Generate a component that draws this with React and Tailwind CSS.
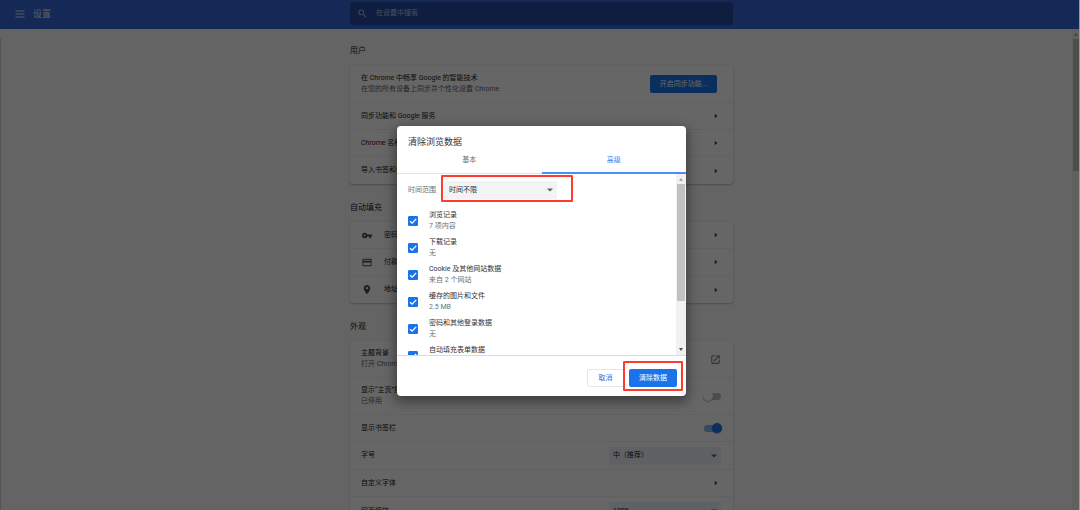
import React from 'react';

function ArrowRight() {
  return (
    <span className="flex w-[11px] shrink-0 justify-center">
      <svg viewBox="0 0 4 6" className="h-[6px] w-1" aria-hidden="true">
        <path d="M.8 .8 3.300 3 .8 5.200z" fill="#333639" />
      </svg>
    </span>
  );
}

function CaretDown({ className }) {
  return (
    <svg viewBox="0 0 6 4" className={`pointer-events-none absolute h-1 w-[6px] ${className}`} aria-hidden="true">
      <path d="M0 .5h6L3 3.5z" fill="#5f6368" />
    </svg>
  );
}

function Heading({ children, first }) {
  return (
    <h2 className={`flex items-center text-[8px] text-[#202124] ${first ? 'h-[37px] pt-[7px]' : 'h-[38px] pt-[10px]'}`}>
      {children}
    </h2>
  );
}

function Card({ children }) {
  return (
    <section className="divide-y divide-[#f0f1f2] rounded-[3px] bg-white shadow-[0_1px_2px_rgba(60,64,67,0.3),0_0_1px_rgba(60,64,67,0.2)]">
      {children}
    </section>
  );
}

function TextPair({ title, sub }) {
  return (
    <span className="flex flex-1 flex-col text-left leading-[11px]">
      <span>{title}</span>
      {sub && <span className="text-[#5f6368]">{sub}</span>}
    </span>
  );
}

function LinkRow({ icon, title }) {
  return (
    <button type="button" className="flex h-[27px] w-full items-center gap-[11px] pr-3 pl-[11px]">
      {icon}
      <TextPair title={title} />
      <ArrowRight />
    </button>
  );
}

function ToggleRow({ title, sub, on }) {
  return (
    <label className={`relative flex items-center pl-[11px] ${on ? 'pr-[11px]' : 'pr-3'} ${sub ? 'h-[37px]' : 'h-[27px]'}`}>
      <TextPair title={title} sub={sub} />
      <input type="checkbox" role="switch" defaultChecked={on} className="peer sr-only" />
      <span
        className={`flex h-[7px] w-[18px] items-center rounded-full ${on ? 'justify-end bg-[#8ab4f8]' : 'justify-start bg-[#bdc1c6]'}`}
      >
        <span
          className={`size-[10px] shrink-0 rounded-full shadow-[0_1px_1px_rgba(0,0,0,0.3)] ${on ? 'bg-[#1a73e8]' : 'bg-white'}`}
        />
      </span>
    </label>
  );
}

function SelectRow({ id, title, value }) {
  return (
    <div className="flex h-7 items-center pr-3 pl-[11px]">
      <label htmlFor={id} className="flex-1">{title}</label>
      <span className="relative flex">
        <select id={id} className="h-[18px] w-28 appearance-none rounded-[2px] bg-[#f1f3f4] pl-1">
          <option>{value}</option>
        </select>
        <CaretDown className="top-[7px] right-1" />
      </span>
    </div>
  );
}

const ICON = 'h-[11px] w-3 shrink-0';

function KeyIcon() {
  return (
    <svg viewBox="0 0 24 24" className={ICON} fill="#4a4d51" aria-hidden="true">
      <path d="M12.65 10A5.99 5.99 0 0 0 7 6c-3.31 0-6 2.69-6 6s2.69 6 6 6a5.99 5.99 0 0 0 5.65-4H17v4h4v-4h2v-4H12.65zM7 14c-1.1 0-2-.9-2-2s.9-2 2-2 2 .9 2 2-.9 2-2 2z" />
    </svg>
  );
}

function CardIcon() {
  return (
    <svg viewBox="0 0 24 24" className={ICON} fill="#4a4d51" aria-hidden="true">
      <path d="M20 4H4c-1.11 0-1.99.89-1.99 2L2 18c0 1.11.89 2 2 2h16c1.11 0 2-.89 2-2V6c0-1.11-.89-2-2-2zm0 14H4v-6h16v6zm0-10H4V6h16v2z" />
    </svg>
  );
}

function PinIcon() {
  return (
    <svg viewBox="0 0 24 24" className={ICON} fill="#4a4d51" aria-hidden="true">
      <path d="M12 2C8.13 2 5 5.13 5 9c0 5.25 7 13 7 13s7-7.75 7-13c0-3.87-3.13-7-7-7zm0 9.5a2.5 2.5 0 0 1 0-5 2.5 2.5 0 0 1 0 5z" />
    </svg>
  );
}

const ITEMS = [
  ['浏览记录', '7 项内容'],
  ['下载记录', '无'],
  ['Cookie 及其他网站数据', '来自 2 个网站'],
  ['缓存的图片和文件', '2.5 MB'],
  ['密码和其他登录数据', '无'],
  ['自动填充表单数据', ''],
];

function CheckItem({ title, sub }) {
  return (
    <label className="flex h-[27px] items-center gap-[11px]">
      <span className="grid size-[10px] shrink-0">
        <input
          type="checkbox"
          defaultChecked
          className="peer col-start-1 row-start-1 size-[10px] appearance-none rounded-[1px] border border-[#5f6368] checked:border-[#1a73e8] checked:bg-[#1a73e8]"
        />
        <svg
          viewBox="0 0 10 10"
          className="pointer-events-none invisible col-start-1 row-start-1 size-[10px] peer-checked:visible"
          aria-hidden="true"
        >
          <path d="M2 5.2 4.1 7.2 8.2 2.9" fill="none" stroke="#fff" strokeWidth="1.3" />
        </svg>
      </span>
      <span className="flex h-[22px] flex-col leading-[11px]">
        <span>{title}</span>
        <span className="text-[#6b6f74]">{sub}</span>
      </span>
    </label>
  );
}

function ClearDataDialog() {
  return (
    <div
      role="dialog"
      aria-labelledby="dialog-title"
      className="flex h-[270px] w-[289px] flex-col rounded-[4px] bg-white text-[#303236] shadow-[0_4px_12px_2px_rgba(0,0,0,0.4)]"
    >
      <h1 id="dialog-title" className="h-5 px-[11px] pt-[10px] text-[9px] leading-3">清除浏览数据</h1>
      <div role="tablist" className="flex h-7 shrink-0 border-b border-[#e0e2e5]">
        <button type="button" role="tab" aria-selected="false" className="flex-1 pt-[2px] text-[#6b6f74]">
          基本
        </button>
        <button
          type="button"
          role="tab"
          aria-selected="true"
          className="-mb-px flex-1 border-b-2 border-[#4a90f4] pt-[3px] text-[#3b86f0]"
        >
          高级
        </button>
      </div>
      <div className="flex min-h-0 flex-1">
        <div className="flex-1 overflow-hidden pt-[7px] pl-[11px]">
          <div className="mb-2 flex h-[18px] items-center gap-2">
            <label htmlFor="range" className="text-[#6b6f74]">时间范围</label>
            <span className="relative flex">
              <select id="range" className="h-[18px] w-[113px] appearance-none rounded-[2px] bg-[#f1f3f4] pl-[5px]">
                <option>时间不限</option>
              </select>
              <CaretDown className="top-[7px] right-1" />
              <span className="pointer-events-none absolute -top-[6px] -left-[3px] h-[27px] w-[132px] rounded-[1px] border-2 border-[#ff3b2f]" />
            </span>
          </div>
          {ITEMS.map(([title, sub]) => (
            <CheckItem key={title} title={title} sub={sub} />
          ))}
        </div>
        <div className="flex w-[10px] flex-col items-center justify-between bg-[#f1f1f1] py-1" aria-hidden="true">
          <svg viewBox="0 0 4 3" className="h-[3px] w-1"><path d="M0 3h4L2 0z" fill="#a3a3a3" /></svg>
          <div className="mt-[3px] mb-auto h-[117px] w-2 bg-[#c1c1c1]" />
          <svg viewBox="0 0 4 3" className="h-[3px] w-1"><path d="M0 0h4L2 3z" fill="#505050" /></svg>
        </div>
      </div>
      <div className="flex h-[41px] shrink-0 items-start justify-end gap-[5px] border-t border-[#dadce0] pt-[13px] pr-[9px]">
        <button type="button" className="h-[18px] w-[37px] rounded-[2px] border border-[#e4e6e9] text-[#1a73e8]">
          取消
        </button>
        <span className="relative flex">
          <button type="button" className="h-[18px] w-12 rounded-[2px] bg-[#1a73e8] text-white">
            清除数据
          </button>
          <span className="pointer-events-none absolute -top-2 -right-[6px] -bottom-1 -left-[6px] rounded-[1px] border-2 border-[#ff3b2f]" />
        </span>
      </div>
    </div>
  );
}

export default function App() {
  return (
    <div className="relative flex h-screen flex-col overflow-hidden bg-[#f9fbfa] font-['Roboto','Noto_Sans_CJK_SC',sans-serif] text-[7px] text-[#202124]">
      <header className="flex h-[29px] shrink-0 items-center bg-[#3367d6] pb-[2px] pl-[3px] text-white">
        <div className="flex-1">
          <div className="flex items-center gap-2 pl-3">
            <button type="button" aria-label="菜单" className="flex">
              <svg viewBox="0 0 10 8" className="h-2 w-[10px]" aria-hidden="true">
                <path d="M.5 1h9M.5 4h9M.5 7h9" stroke="#e3eafa" strokeWidth="1" />
              </svg>
            </button>
            <span className="pt-px text-[9px] leading-3 text-[#e3eafa]">设置</span>
          </div>
        </div>
        <label className="flex h-[23px] w-[383px] items-center gap-1 rounded-[2px] bg-black/25 pl-[7px]">
          <svg viewBox="0 0 24 24" className="size-[11px] shrink-0" fill="#b4c3e6" aria-hidden="true">
            <path d="M15.5 14h-.79l-.28-.27A6.47 6.47 0 0 0 16 9.500 6.500 6.500 0 1 0 9.500 16c1.610 0 3.090-.59 4.230-1.570l.27.28v.79l5 4.990L20.490 19l-4.990-5zm-6 0C7.010 14 5 11.990 5 9.500S7.010 5 9.500 5 14 7.010 14 9.500 11.990 14 9.500 14z" />
          </svg>
          <input
            type="search"
            aria-label="在设置中搜索"
            placeholder="在设置中搜索"
            className="flex-1 bg-transparent pl-1 placeholder:text-[#b4c3e6]"
          />
        </label>
        <div className="flex-1" />
      </header>

      <main className="flex min-h-0 flex-1 justify-center pl-[3px]">
        <div className="w-[383px]">
          <Heading first>用户</Heading>
          <Card>
            <div className="flex h-[37px] items-center pr-4 pl-[11px]">
              <TextPair title="在 Chrome 中畅享 Google 的智能技术" sub="在您的所有设备上同步并个性化设置 Chrome" />
              <button type="button" className="h-[18px] w-[67px] rounded-[2px] bg-[#1a73e8] text-white">
                开启同步功能...
              </button>
            </div>
            <LinkRow title="同步功能和 Google 服务" />
            <LinkRow title="Chrome 名称和图片" />
            <LinkRow title="导入书签和设置" />
          </Card>

          <Heading>自动填充</Heading>
          <Card>
            <LinkRow icon={<KeyIcon />} title="密码" />
            <LinkRow icon={<CardIcon />} title="付款方式" />
            <LinkRow icon={<PinIcon />} title="地址和其他信息" />
          </Card>

          <Heading>外观</Heading>
          <Card>
            <a href="#theme" className="flex h-[37px] items-center pr-3 pl-[11px]">
              <TextPair title="主题背景" sub="打开 Chrome 网上应用店" />
              <svg viewBox="0 0 24 24" className="size-[11px]" fill="#5f6368" aria-hidden="true">
                <path d="M19 19H5V5h7V3H5a2 2 0 0 0-2 2v14a2 2 0 0 0 2 2h14c1.100 0 2-.9 2-2v-7h-2v7zM14 3v2h3.590l-9.830 9.830 1.410 1.410L19 6.410V10h2V3h-7z" />
              </svg>
            </a>
            <ToggleRow title={'显示“主页”按钮'} sub="已停用" />
            <ToggleRow title="显示书签栏" on />
            <SelectRow id="font-size" title="字号" value="中（推荐）" />
            <LinkRow title="自定义字体" />
            <SelectRow id="zoom" title="网页缩放" value="100%" />
          </Card>
        </div>
      </main>

      <div
        className="absolute top-[29px] right-px bottom-0 flex w-[7px] flex-col items-center bg-[#f1f1f1] pt-1"
        aria-hidden="true"
      >
        <svg viewBox="0 0 4 3" className="h-[3px] w-1"><path d="M0 3h4L2 0z" fill="#a3a3a3" /></svg>
        <div className="mt-[3px] h-[132px] w-[6px] bg-[#c1c1c1]" />
      </div>
      <div className="absolute top-[38px] bottom-0 left-0 w-px bg-[#d0d0d0]" aria-hidden="true" />

      <div className="absolute inset-0 flex items-center justify-center border-r border-[#9a9a9a] bg-black/60 pt-3 pl-1">
        <ClearDataDialog />
      </div>
    </div>
  );
}
